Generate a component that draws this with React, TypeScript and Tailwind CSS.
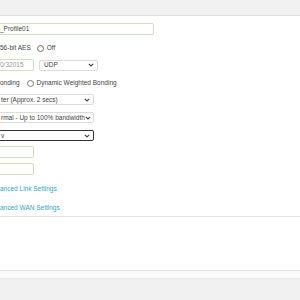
import React from "react";

const Chevron = () => (
  <svg width="6" height="4" viewBox="0 0 6 4" className="shrink-0">
    <path d="M0.8 0.8 L3 3 L5.2 0.8" fill="none" stroke="#444" strokeWidth="1.1" />
  </svg>
);

const Radio = () => (
  <span className="inline-block h-[7px] w-[7px] shrink-0 rounded-full border border-[#777] bg-white" />
);

const Select = ({ text, width, focused = false }: { text: string; width: string; focused?: boolean }) => (
  <div
    className={`flex h-[11px] items-center justify-between rounded-[2px] bg-white pl-[4px] pr-[3px] ${width} ${
      focused ? "border border-[#333]" : "border border-[#dcdcdc]"
    }`}
  >
    <span className="whitespace-nowrap">{text}</span>
    <Chevron />
  </div>
);

const GreenInput = ({ text = "", width, muted = false }: { text?: string; width: string; muted?: boolean }) => (
  <div
    className={`flex h-[12px] items-center rounded-[2px] border border-[#cfe2c0] bg-white pl-[3px] ${width} ${
      muted ? "text-[#999]" : ""
    }`}
  >
    <span className="whitespace-nowrap">{text}</span>
  </div>
);

export default function App() {
  return (
    <div className="flex h-[300px] w-[300px] flex-col overflow-hidden bg-[#f1f1f1] font-['Liberation_Sans',Arial,sans-serif] text-[6.5px] text-[#444]">
      <div className="h-[16px] shrink-0 border-b border-[#dedede]" />

      {/* form panel */}
      <div className="flex h-[201px] shrink-0 flex-col border-b border-[#e3e3e3] bg-white pt-[7px]">
        <div className="-ml-[4px]">
          <GreenInput text="_Profile01" width="w-[158px]" />
        </div>

        <div className="mt-[7px] flex h-[12px] items-center gap-[4px] whitespace-nowrap">
          <span>56-bit AES</span>
          <span className="ml-[2px] flex items-center gap-[3px]">
            <Radio />
            <span>Off</span>
          </span>
        </div>

        <div className="mt-[5px] flex items-center gap-[5px] -ml-[4px]">
          <GreenInput text="0/32015" width="w-[38px]" muted />
          <Select text="UDP" width="w-[59px]" />
        </div>

        <div className="mt-[6px] flex h-[12px] items-center gap-[7px] whitespace-nowrap">
          <span>onding</span>
          <span className="flex items-center gap-[3px]">
            <Radio />
            <span>Dynamic Weighted Bonding</span>
          </span>
        </div>

        <div className="mt-[5px] -ml-[4px]">
          <Select text="ter (Approx. 2 secs)" width="w-[98px]" />
        </div>
        <div className="mt-[7px] -ml-[4px]">
          <Select text="rmal - Up to 100% bandwidth" width="w-[98px]" />
        </div>
        <div className="mt-[7px] -ml-[4px]">
          <Select text="v" width="w-[98px]" focused />
        </div>

        <div className="mt-[5px] -ml-[4px]">
          <GreenInput width="w-[38px]" />
        </div>
        <div className="mt-[5px] -ml-[4px]">
          <GreenInput width="w-[38px]" />
        </div>

        <div className="mt-[9px] whitespace-nowrap text-[#36a6c6]">anced Link Settings</div>
        <div className="mt-[9px] whitespace-nowrap text-[#36a6c6]">anced WAN Settings</div>
      </div>

      <div className="h-[54px] shrink-0 border-b border-[#e3e3e3] bg-white" />
      <div className="h-[8px] shrink-0 border-b border-[#e6e6e6] bg-[#fafafa]" />
    </div>
  );
}
